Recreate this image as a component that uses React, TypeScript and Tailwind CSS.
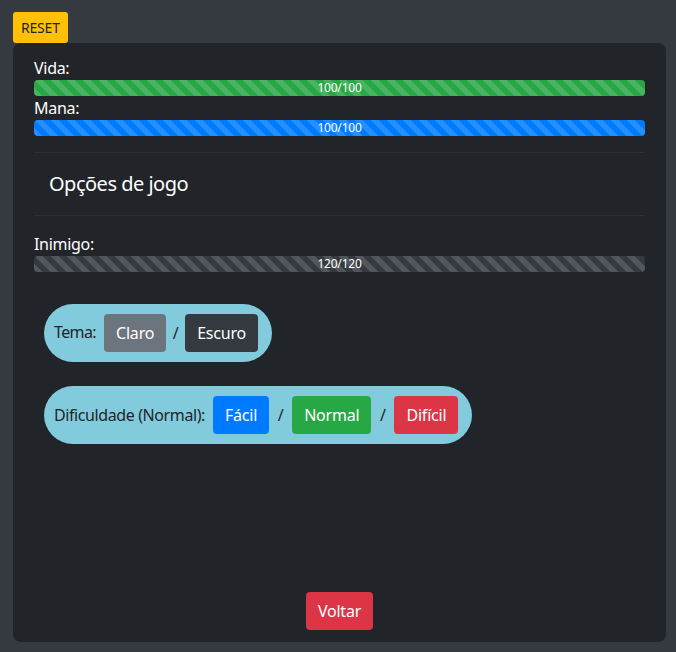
import React from "react";

const stripes =
  "bg-[linear-gradient(45deg,rgba(255,255,255,.15)_25%,transparent_25%,transparent_50%,rgba(255,255,255,.15)_50%,rgba(255,255,255,.15)_75%,transparent_75%,transparent)] [background-size:16px_16px]";

function Bar({ label, value, color }: { label: string; value: string; color: string }) {
  return (
    <div>
      <div className="text-[16px] leading-[24px] text-white tracking-[-0.3px]">{label}</div>
      <div className="h-4 rounded-[4px] overflow-hidden bg-[#e9ecef]">
        <div
          className={`h-full w-full flex items-center justify-center text-[12px] leading-none text-white tracking-[-0.2px] ${color} ${stripes}`}
        >
          {value}
        </div>
      </div>
    </div>
  );
}

function Btn({ children, color }: { children: React.ReactNode; color: string }) {
  return (
    <button
      className={`h-[38px] px-3 rounded-[4px] text-[16px] leading-[24px] text-white tracking-[-0.2px] ${color}`}
    >
      {children}
    </button>
  );
}

export default function App() {
  return (
    <div
      className="min-h-[652px] w-full bg-[#343a40] pl-[13px] pr-[10px] pt-[12px]"
      style={{ fontFamily: '"Segoe UI", "Noto Sans", "Open Sans", sans-serif' }}
    >
      <button className="h-[31px] px-2 rounded-[3px] bg-[#ffc107] text-[#212529] text-[14px] leading-[21px] tracking-[-0.2px]">
        RESET
      </button>
      <div className="h-[599px] rounded-[8px] bg-[#212529] px-[21px] pt-[13px] pb-[12px] flex flex-col">
        <Bar label="Vida:" value="100/100" color="bg-[#28a745]" />
        <Bar label="Mana:" value="100/100" color="bg-[#007bff]" />
        <div className="mt-4 h-px bg-[#2c3035]" />
        <div className="py-4 pl-[15px] text-[20px] leading-[30px] text-white tracking-[-0.5px]">Opções de jogo</div>
        <div className="h-px bg-[#2c3035]" />
        <div className="mt-4">
          <Bar label="Inimigo:" value="120/120" color="bg-[#343a40]" />
        </div>
        <div className="mt-8 ml-[10px] flex flex-col items-start gap-6">
          <div className="flex items-center gap-2 rounded-full bg-[#82cbdd] pl-[10px] pr-[14px] py-[10px] text-[#212529] text-[16px] leading-[24px]">
            <span className="-mt-[2px] tracking-[-0.6px]">Tema:</span>
            <Btn color="bg-[#6c757d]">Claro</Btn>
            <span className="-mx-[1.5px]">/</span>
            <Btn color="bg-[#343a40]">Escuro</Btn>
          </div>
          <div className="flex items-center gap-2 rounded-full bg-[#82cbdd] pl-[10px] pr-[14px] py-[10px] text-[#212529] text-[16px] leading-[24px]">
            <span className="tracking-[-0.4px]">Dificuldade (Normal):</span>
            <Btn color="bg-[#007bff]">Fácil</Btn>
            <span className="mx-[0.5px]">/</span>
            <Btn color="bg-[#28a745]">Normal</Btn>
            <span className="mx-[0.5px]">/</span>
            <Btn color="bg-[#dc3545]">Difícil</Btn>
          </div>
        </div>
        <div className="mt-auto flex justify-center">
          <Btn color="bg-[#dc3545]">Voltar</Btn>
        </div>
      </div>
    </div>
  );
}
